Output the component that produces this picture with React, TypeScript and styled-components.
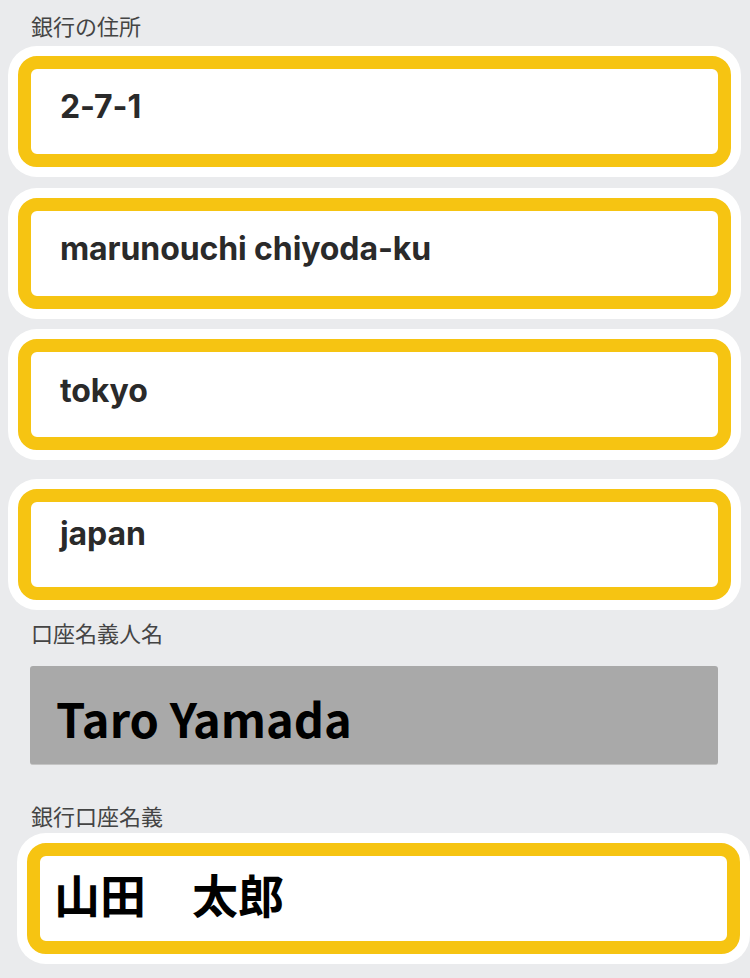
import React from "react";
import styled, { createGlobalStyle } from "styled-components";

const GlobalStyle = createGlobalStyle`
  html, body {
    margin: 0;
    padding: 0;
    background: #eaebed;
  }
  body {
    font-family: "Noto Sans CJK JP", "Noto Sans", sans-serif;
  }
`;

const Page = styled.div`
  width: 750px;
  min-height: 978px;
  background: #eaebed;
  display: flex;
  flex-direction: column;
  padding-top: 10px;
  box-sizing: border-box;
`;

const Label = styled.div<{ $mt?: number }>`
  margin-top: ${(p) => p.$mt ?? 0}px;
  padding-left: 31px;
  height: 30px;
  font-family: "Noto Sans CJK JP", sans-serif;
  font-size: 22px;
  line-height: 30px;
  font-weight: 400;
  color: #444;
`;

const Field = styled.div<{ $mt: number; $ml: number; $pt: number }>`
  margin-top: ${(p) => p.$mt}px;
  margin-left: ${(p) => p.$ml}px;
  width: 713px;
  height: 111px;
  box-sizing: border-box;
  border: 13px solid #f6c412;
  border-radius: 19px;
  background: #fff;
  box-shadow: 0 0 0 10px #fff;
  padding-top: ${(p) => p.$pt}px;
  padding-left: 29px;
`;

const FieldText = styled.div`
  font-family: "Inter", "Noto Sans", sans-serif;
  font-weight: 700;
  font-size: 32px;
  line-height: 36px;
  letter-spacing: -0.1px;
  color: #2a2a2a;
  white-space: nowrap;
`;

const NameText = styled.div`
  font-family: "Noto Sans CJK JP", sans-serif;
  font-weight: 700;
  font-size: 46px;
  line-height: 46px;
  color: #000;
  margin-left: -15px;
  white-space: pre;
`;

const ReadOnlyBox = styled.div`
  margin-top: 19px;
  margin-left: 30px;
  width: 688px;
  height: 99px;
  box-sizing: border-box;
  background: #a9a9a9;
  border-radius: 3px;
  border-bottom: 1px solid #c4c4c4;
  padding-top: 28px;
  padding-left: 26px;
`;

const ReadOnlyText = styled.div`
  font-family: "Noto Sans CJK JP", sans-serif;
  font-weight: 700;
  font-size: 47px;
  line-height: 48px;
  color: #000;
  white-space: nowrap;
`;

export default function App() {
  return (
    <>
      <GlobalStyle />
      <Page>
        <Label>銀行の住所</Label>
        <Field $mt={16} $ml={18} $pt={20}>
          <FieldText>2-7-1</FieldText>
        </Field>
        <Field $mt={31} $ml={18} $pt={20}>
          <FieldText>marunouchi chiyoda-ku</FieldText>
        </Field>
        <Field $mt={30} $ml={18} $pt={21}>
          <FieldText>tokyo</FieldText>
        </Field>
        <Field $mt={39} $ml={18} $pt={14}>
          <FieldText>japan</FieldText>
        </Field>
        <Label $mt={17}>口座名義人名</Label>
        <ReadOnlyBox>
          <ReadOnlyText>Taro Yamada</ReadOnlyText>
        </ReadOnlyBox>
        <Label $mt={35}>銀行口座名義</Label>
        <Field $mt={13} $ml={27} $pt={14}>
          <NameText>山田　太郎</NameText>
        </Field>
      </Page>
    </>
  );
}
